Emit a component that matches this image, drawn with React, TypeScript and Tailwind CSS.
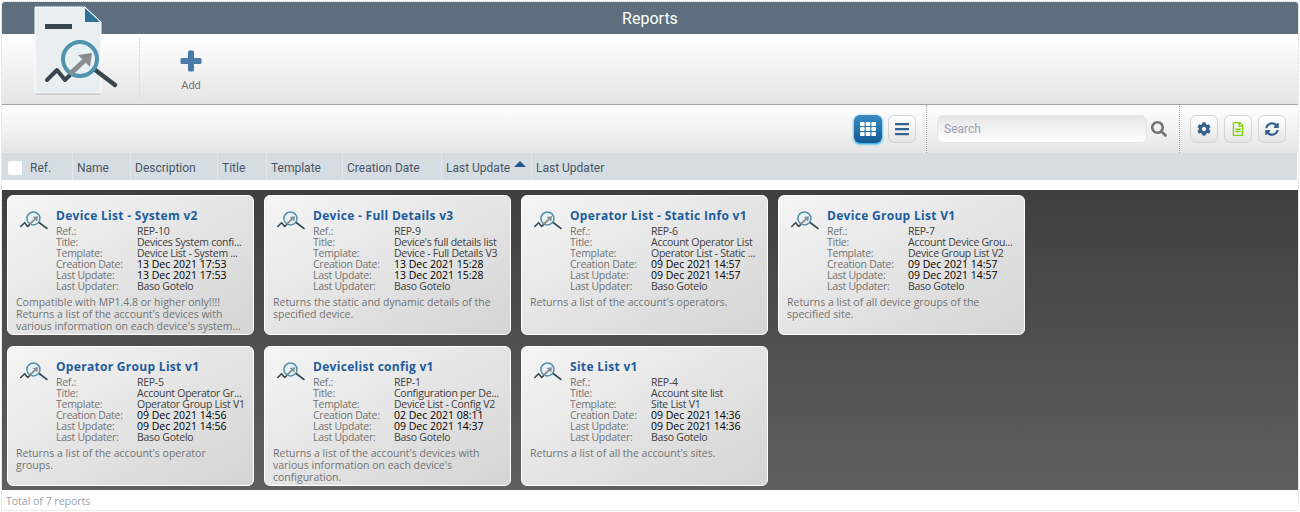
import { FaBars, FaCog, FaRegFileAlt, FaSearch, FaSyncAlt, FaTh } from "react-icons/fa";
import type { ReactNode } from "react";

const reports = [
  {
    name: "Device List - System v2",
    ref: "REP-10",
    title: "Devices System confi...",
    template: "Device List - System ...",
    created: "13 Dec 2021 17:53",
    updated: "13 Dec 2021 17:53",
    description: "Compatible with MP1.4.8 or higher only!!!! Returns a list of the account's devices with various information on each device's system...",
  },
  {
    name: "Device - Full Details v3",
    ref: "REP-9",
    title: "Device's full details list",
    template: "Device - Full Details V3",
    created: "13 Dec 2021 15:28",
    updated: "13 Dec 2021 15:28",
    description: "Returns the static and dynamic details of the specified device.",
  },
  {
    name: "Operator List - Static Info v1",
    ref: "REP-6",
    title: "Account Operator List",
    template: "Operator List - Static ...",
    created: "09 Dec 2021 14:57",
    updated: "09 Dec 2021 14:57",
    description: "Returns a list of the account's operators.",
  },
  {
    name: "Device Group List V1",
    ref: "REP-7",
    title: "Account Device Grou...",
    template: "Device Group List V2",
    created: "09 Dec 2021 14:57",
    updated: "09 Dec 2021 14:57",
    description: "Returns a list of all device groups of the specified site.",
  },
  {
    name: "Operator Group List v1",
    ref: "REP-5",
    title: "Account Operator Gr...",
    template: "Operator Group List V1",
    created: "09 Dec 2021 14:56",
    updated: "09 Dec 2021 14:56",
    description: "Returns a list of the account's operator groups.",
  },
  {
    name: "Devicelist config v1",
    ref: "REP-1",
    title: "Configuration per De...",
    template: "Device List - Config V2",
    created: "02 Dec 2021 08:11",
    updated: "09 Dec 2021 14:37",
    description: "Returns a list of the account's devices with various information on each device's configuration.",
  },
  {
    name: "Site List v1",
    ref: "REP-4",
    title: "Account site list",
    template: "Site List V1",
    created: "09 Dec 2021 14:36",
    updated: "09 Dec 2021 14:36",
    description: "Returns a list of all the account's sites.",
  },
];

const columns = ["Name", "Description", "Title", "Template", "Creation Date", "Last Update", "Last Updater"];

// lens + chart drawn in the logo's coordinates, reused small on the cards
function LensShapes() {
  return (
    <>
      <path d="M47 80 L57 70 L65 80 L72 73" fill="none" stroke="#39454f" strokeWidth="4" strokeLinecap="round" strokeLinejoin="round" />
      <path d="M94 69 L115 85" fill="none" stroke="#39454f" strokeWidth="4.5" strokeLinecap="round" />
      <circle cx="80" cy="59" r="17" fill="#e6f1f5" fillOpacity="0.8" stroke="#4f93ad" strokeWidth="4" />
      <path d="M70 74 L85 60" fill="none" stroke="#8a8d90" strokeWidth="5" />
      <path d="M78 55 L92 53 L90 67 Z" fill="#8a8d90" />
    </>
  );
}

function Logo() {
  return (
    <svg viewBox="30 2 92 96" className="absolute top-0 left-7 h-24 w-23">
      <path d="M35 7 H85 L101 22 V93 H35 Z" fill="#000" fillOpacity="0.25" transform="translate(0 1.5)" />
      <path d="M35 7 H85 L101 22 V93 H35 Z" fill="#e9eff1" stroke="#fff" strokeWidth="1" />
      <path d="M85 8 L100 22 H85 Z" fill="#2d7199" />
      <rect x="45" y="24" width="27" height="5" fill="#39454f" />
      <LensShapes />
    </svg>
  );
}

function ToolButton({ active, children }: { active?: boolean; children: ReactNode }) {
  return (
    <button
      className={
        active
          ? "flex h-7 w-7 items-center justify-center rounded-md bg-gradient-to-b from-[#3a8cc4] to-[#105a92] text-base text-white shadow-sm shadow-sky-500"
          : "flex h-7 w-7 items-center justify-center rounded-md border border-neutral-300 bg-gradient-to-b from-white to-neutral-200 text-sm text-[#35618d]"
      }
    >
      {children}
    </button>
  );
}

function Row({ label, value, dark }: { label: string; value: string; dark?: boolean }) {
  return (
    <div className="flex leading-[11px] whitespace-nowrap">
      <span className="w-20.25 shrink-0 tracking-tight text-neutral-500">{label}</span>
      <span className={dark ? "text-black" : "tracking-tight text-neutral-700"}>{value}</span>
    </div>
  );
}

function ReportCard({ report }: { report: (typeof reports)[number] }) {
  return (
    <div className="h-35 w-[247px] rounded-md border border-white bg-gradient-to-br from-neutral-100 to-neutral-300 pt-2.5 pr-2 pl-2 text-[10.5px]">
      <div className="flex pl-1">
        <svg viewBox="45 38 73 50" className="mt-1 mr-2 h-5 w-7 shrink-0">
          <LensShapes />
        </svg>
        <div className="min-w-0 flex-1">
          <div className="mt-0.5 mb-0.5 text-xs leading-4 font-bold tracking-wide whitespace-nowrap text-[#1d5c9c]">{report.name}</div>
          <Row label="Ref.:" value={report.ref} />
          <Row label="Title:" value={report.title} />
          <Row label="Template:" value={report.template} />
          <Row label="Creation Date:" value={report.created} dark />
          <Row label="Last Update:" value={report.updated} dark />
          <Row label="Last Updater:" value="Baso Gotelo" />
        </div>
      </div>
      <p className="mt-1 leading-3 text-neutral-500">{report.description}</p>
    </div>
  );
}

export default function App() {
  return (
    <div className="relative m-px h-[510px] overflow-hidden rounded border border-dotted border-neutral-300 bg-white font-['Roboto',sans-serif]">
      <div className="flex h-8 items-center justify-center bg-[#5d6f7e] pt-0.5 text-base text-white">Reports</div>
      <Logo />
      <div className="flex h-[71px] border-b border-neutral-400 bg-gradient-to-b from-white to-neutral-200">
        <div className="my-1 w-34.5 border-r border-dotted border-neutral-300" />
        <div className="flex w-25.5 flex-col items-center justify-center gap-1.5 pt-1.5 text-[11px] text-neutral-500">
          <svg viewBox="0 0 22 22" className="size-5.5 text-[#4a7aa7]">
            <path d="M8 2 a1.5 1.5 0 0 1 1.5 -1.5 h3 a1.5 1.5 0 0 1 1.5 1.5 V8 H20 a1.5 1.5 0 0 1 1.5 1.5 v3 a1.5 1.5 0 0 1 -1.5 1.5 H14 V20 a1.5 1.5 0 0 1 -1.5 1.5 h-3 a1.5 1.5 0 0 1 -1.5 -1.5 V14 H2 a1.5 1.5 0 0 1 -1.5 -1.5 v-3 a1.5 1.5 0 0 1 1.5 -1.5 H8 Z" fill="currentColor" />
          </svg>
          <span>Add</span>
        </div>
      </div>
      <div className="flex h-12 justify-end bg-gradient-to-b from-white to-neutral-200 pr-3">
        <div className="flex items-center gap-1.5 border-r border-dotted border-neutral-400 pr-2.5">
          <ToolButton active>
            <FaTh />
          </ToolButton>
          <ToolButton>
            <FaBars className="text-base" />
          </ToolButton>
        </div>
        <div className="flex items-center gap-1 border-r border-dotted border-neutral-400 pr-3 pl-2.5">
          <div className="flex h-7 w-52.5 items-center rounded-md border border-neutral-200 bg-gradient-to-b from-neutral-200 to-white px-1.5 text-xs text-gray-400">
            Search
          </div>
          <FaSearch className="text-base text-neutral-500" />
        </div>
        <div className="flex items-center gap-1.5 pl-2.5">
          <ToolButton>
            <FaCog />
          </ToolButton>
          <ToolButton>
            <FaRegFileAlt className="text-lime-500" />
          </ToolButton>
          <ToolButton>
            <FaSyncAlt />
          </ToolButton>
        </div>
      </div>
      <div className="mr-px grid h-[27px] grid-cols-[70px_58px_87px_49px_76px_99px_90px_auto] items-center bg-[#d5dde2] text-xs text-gray-600">
        <div className="flex items-center gap-2 pt-0.5 pl-1.5">
          <span className="size-3.5 rounded-xs bg-white" />
          <span>Ref.</span>
        </div>
        {columns.map((column) => (
          <div key={column} className="flex h-full items-center border-l border-gray-200 pt-0.5 pl-1">
            {column}
            {column === "Last Update" && <span className="mb-2 ml-1 size-0 border-x-6 border-b-6 border-x-transparent border-b-[#21598c]" />}
          </div>
        ))}
      </div>
      <div className="h-2.5" />
      <div className="h-75 bg-gradient-to-b from-[#3f3f3f] to-[#5f5f5f] p-1.25 font-['Open_Sans',sans-serif]">
        <div className="flex w-262 flex-wrap gap-x-2.5 gap-y-[11px]">
          {reports.map((report) => (
            <ReportCard key={report.ref} report={report} />
          ))}
        </div>
      </div>
      <div className="px-1 pt-1 font-['Open_Sans',sans-serif] text-[10.5px] text-gray-400">Total of 7 reports</div>
    </div>
  );
}
